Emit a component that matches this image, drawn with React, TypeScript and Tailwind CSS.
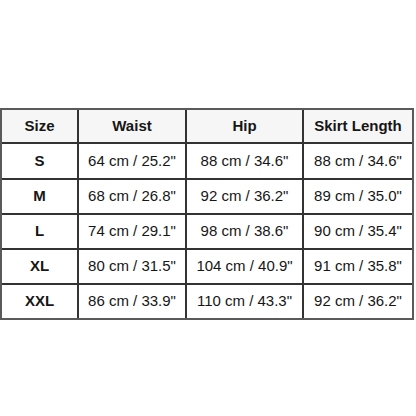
import React from "react";

const rows = [
  ["S", "64 cm / 25.2\"", "88 cm / 34.6\"", "88 cm / 34.6\""],
  ["M", "68 cm / 26.8\"", "92 cm / 36.2\"", "89 cm / 35.0\""],
  ["L", "74 cm / 29.1\"", "98 cm / 38.6\"", "90 cm / 35.4\""],
  ["XL", "80 cm / 31.5\"", "104 cm / 40.9\"", "91 cm / 35.8\""],
  ["XXL", "86 cm / 33.9\"", "110 cm / 43.3\"", "92 cm / 36.2\""],
];

const widths = ["w-[77px]", "w-[108px]", "w-[117px]", "w-[108px]"];
const heights = ["h-[36px]", "h-[35px]", "h-[35px]", "h-[35px]", "h-[33px]"];

export default function App() {
  return (
    <div
      className="w-[416px] h-[416px] bg-white pt-[108px] text-[15px] text-[#161616]"
      style={{ fontFamily: '"Liberation Sans", Arial, sans-serif' }}
    >
      <div className="w-[414px] border-2 border-[#5a5a5a] flex flex-col">
        <div className="flex h-[34px] bg-[#f6f6f6] border-b-2 border-[#333]">
          {["Size", "Waist", "Hip", "Skirt Length"].map((h, i) => (
            <div
              key={h}
              className={`${widths[i]} flex items-center justify-center font-bold ${i < 3 ? "border-r-2 border-[#333]" : ""}`}
            >
              {h}
            </div>
          ))}
        </div>
        {rows.map((r, ri) => (
          <div
            key={r[0]}
            className={`flex ${heights[ri]} ${ri < rows.length - 1 ? "border-b-2 border-[#333]" : ""}`}
          >
            {r.map((c, i) => (
              <div
                key={i}
                className={`${widths[i]} flex items-center justify-center ${i === 0 ? "font-bold" : ""} ${i < 3 ? "border-r-2 border-[#333]" : ""}`}
              >
                {c}
              </div>
            ))}
          </div>
        ))}
      </div>
    </div>
  );
}
